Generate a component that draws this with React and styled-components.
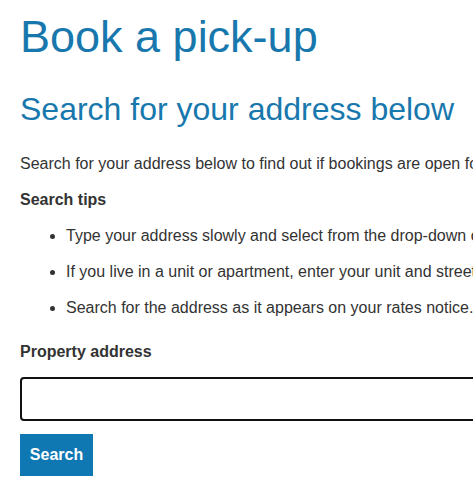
import React from 'react';
import styled, { createGlobalStyle } from 'styled-components';

const GlobalStyle = createGlobalStyle`
	html, body {
		margin: 0;
		padding: 0;
		background: #fff;
		overflow: hidden;
	}
	body {
		font-family: "Liberation Sans", Arial, sans-serif;
		color: #333;
	}
`

const Page = styled.main`
	padding: 0 20px;
	width: 760px;
	white-space: nowrap;
`

const Title = styled.h1`
	margin: 12px 0 0;
	font-size: 45px;
	line-height: 50px;
	font-weight: 400;
	color: #1878ad;
`

const Subtitle = styled.h2`
	margin: 28px 0 0;
	font-size: 32px;
	line-height: 38px;
	font-weight: 400;
	color: #1878ad;
`

const Intro = styled.p`
	margin: 24px 0 0;
	font-size: 16px;
	line-height: 24px;
`

const TipsHeading = styled.h3`
	margin: 12px 0 0;
	font-size: 16px;
	line-height: 24px;
	font-weight: 700;
`

const Tips = styled.ul`
	margin: 12px 0 0;
	padding-left: 46px;
	font-size: 16px;
	line-height: 24px;

	& > li + li {
		margin-top: 12px;
	}
`

const Form = styled.form`
	display: flex;
	flex-direction: column;
	align-items: flex-start;
	margin-top: 20px;
`

const Label = styled.label`
	font-size: 16px;
	line-height: 24px;
	font-weight: 700;
`

const AddressInput = styled.input`
	box-sizing: border-box;
	margin-top: 13px;
	width: 640px;
	height: 44px;
	border: 2px solid #111;
	border-radius: 4px;
	padding: 0 12px;
	font: inherit;
	font-size: 16px;
	outline: none;
`

const SearchButton = styled.button`
	margin-top: 13px;
	width: 73px;
	height: 42px;
	border: 0;
	border-radius: 0;
	background: #0f78b3;
	color: #fff;
	font-family: "Liberation Sans", Arial, sans-serif;
	font-size: 16px;
	font-weight: 700;
	cursor: pointer;
`

export default function App() {
	return (
		<>
			<GlobalStyle />
			<Page>
				<Title>Book a pick-up</Title>
				<Subtitle>Search for your address below</Subtitle>
				<Intro>Search for your address below to find out if bookings are open for your area.</Intro>
				<TipsHeading>Search tips</TipsHeading>
				<Tips>
					<li>Type your address slowly and select from the drop-down options.</li>
					<li>If you live in a unit or apartment, enter your unit and street number.</li>
					<li>Search for the address as it appears on your rates notice.</li>
				</Tips>
				<Form onSubmit={e => e.preventDefault()}>
					<Label htmlFor="address">Property address</Label>
					<AddressInput id="address" type="text" />
					<SearchButton type="submit">Search</SearchButton>
				</Form>
			</Page>
		</>
	);
}
